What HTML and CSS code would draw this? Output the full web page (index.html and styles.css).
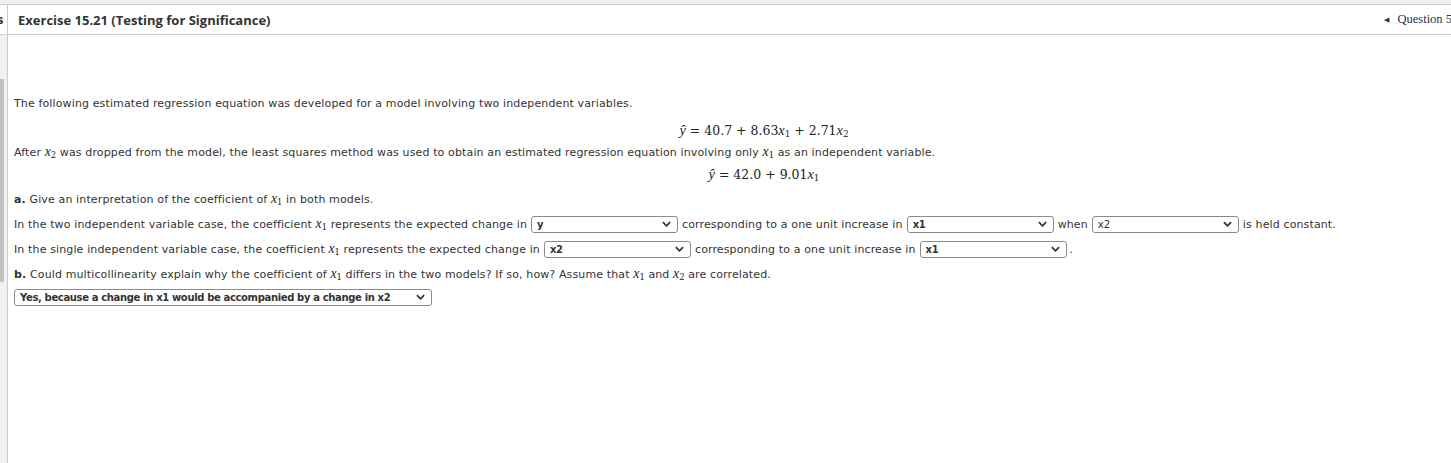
FILE: index.html
```html
<!DOCTYPE html>
<html>
<head>
<meta charset="utf-8">
<link rel="stylesheet" href="styles.css">
</head>
<body>
<div class="page">
  <div class="topstrip"></div>
  <div class="frame">
    <div class="side">
      <div class="side-head">s</div>
      <div class="side-body"><div class="thumb"></div></div>
    </div>
    <div class="main">
      <div class="head">
        <div class="title">Exercise 15.21 (Testing for Significance)</div>
        <div class="qnav"><span class="tri">&#9664;</span>Question 5</div>
      </div>
      <div class="content">
        <div class="row r-first">The following estimated regression equation was developed for a model involving two independent variables.</div>
        <div class="row eq eq1"><span class="m"><i>ŷ</i> = 40.7 + 8.63<i>x</i><sub>1</sub> + 2.71<i>x</i><sub>2</sub></span></div>
        <div class="row r-tight">After <span class="mi"><i>x</i><sub>2</sub></span> was dropped from the model, the least squares method was used to obtain an estimated regression equation involving only <span class="mi"><i>x</i><sub>1</sub></span> as an independent variable.</div>
        <div class="row eq r-tight"><span class="m"><i>ŷ</i> = 42.0 + 9.01<i>x</i><sub>1</sub></span></div>
        <div class="row"><b>a.</b> Give an interpretation of the coefficient of <span class="mi"><i>x</i><sub>1</sub></span> in both models.</div>
        <div class="row">In the two independent variable case, the coefficient <span class="mi"><i>x</i><sub>1</sub></span> represents the expected change in<span class="sel w147"><span class="val">y</span><svg class="chev" viewBox="0 0 10 6"><path d="M1 1 L5 5 L9 1" /></svg></span>corresponding to a one unit increase in<span class="sel w147"><span class="val">x1</span><svg class="chev" viewBox="0 0 10 6"><path d="M1 1 L5 5 L9 1" /></svg></span>when<span class="sel w147"><span class="val plain">x2</span><svg class="chev" viewBox="0 0 10 6"><path d="M1 1 L5 5 L9 1" /></svg></span>is held constant.</div>
        <div class="row">In the single independent variable case, the coefficient <span class="mi"><i>x</i><sub>1</sub></span> represents the expected change in<span class="sel w147"><span class="val">x2</span><svg class="chev" viewBox="0 0 10 6"><path d="M1 1 L5 5 L9 1" /></svg></span>corresponding to a one unit increase in<span class="sel w147 nr"><span class="val">x1</span><svg class="chev" viewBox="0 0 10 6"><path d="M1 1 L5 5 L9 1" /></svg></span><span class="dot">.</span></div>
        <div class="row"><b>b.</b> Could multicollinearity explain why the coefficient of <span class="mi"><i>x</i><sub>1</sub></span> differs in the two models? If so, how? Assume that <span class="mi"><i>x</i><sub>1</sub></span> and <span class="mi"><i>x</i><sub>2</sub></span> are correlated.</div>
        <div class="row r-sel"><span class="sel wide first"><span class="val">Yes, because a change in x1 would be accompanied by a change in x2</span><svg class="chev" viewBox="0 0 10 6"><path d="M1 1 L5 5 L9 1" /></svg></span></div>
      </div>
    </div>
  </div>
</div>
</body>
</html>
```

FILE: styles.css
```css
html, body {
  margin: 0;
  padding: 0;
  background: #ffffff;
  overflow: hidden;
}
.page {
  width: 1514px;
  height: 463px;
  display: flex;
  flex-direction: column;
  font-family: "DejaVu Sans", Verdana, sans-serif;
  color: #333333;
}
.topstrip {
  height: 4px;
  background: #f0f0f0;
  border-bottom: 1px solid #cccccc;
  flex: none;
}
.frame {
  flex: 1;
  display: flex;
}
.side {
  width: 7px;
  border-right: 1px solid #cccccc;
  display: flex;
  flex-direction: column;
  flex: none;
}
.side-head {
  height: 29px;
  border-bottom: 1px solid #cccccc;
  background: #ffffff;
  font-family: "Open Sans", sans-serif;
  font-weight: 700;
  font-size: 13px;
  line-height: 29px;
  overflow: hidden;
  text-indent: -3px;
  color: #333333;
}
.side-body {
  flex: 1;
  background: #f0f0f0;
}
.thumb {
  width: 4px;
  height: 203px;
  margin-top: 44px;
  background: #c1c1c1;
}
.main {
  flex: 1;
  display: flex;
  flex-direction: column;
}
.head {
  height: 29px;
  border-bottom: 1px solid #cccccc;
  display: flex;
  align-items: center;
  padding-left: 10px;
}
.title {
  font-family: "Open Sans", sans-serif;
  font-weight: 700;
  font-size: 13px;
  color: #333333;
}
.qnav {
  margin-left: auto;
  padding-right: 62px;
  font-family: "Liberation Serif", "Times New Roman", serif;
  font-size: 12.5px;
  color: #24325a;
  display: flex;
  align-items: center;
}
.tri {
  font-size: 7px;
  margin-right: 8px;
  color: #333333;
}
.content {
  padding: 58px 0 0 6px;
  width: 1500px;
}
.row {
  height: 22px;
  line-height: 22px;
  font-size: 11px;
  letter-spacing: 0.13px;
  margin-top: 3px;
  white-space: nowrap;
}
.r-first { margin-top: 0; }
.eq1 { margin-top: 4px; }
.r-tight { margin-top: 0; }
.r-sel { margin-top: 2px; }
.eq {
  text-align: center;
  letter-spacing: 0;
}
.m {
  font-family: "DejaVu Serif", "Liberation Serif", serif;
  font-size: 12.5px;
  color: #222222;
}
.m i, .mi i {
  font-family: "Liberation Serif", serif;
  font-style: italic;
  font-size: 115%;
}
.m sub, .mi sub {
  font-family: "DejaVu Serif", serif;
  font-size: 70%;
  vertical-align: -2px;
  line-height: 0;
}
.mi {
  font-family: "DejaVu Serif", serif;
  font-size: 12px;
  color: #222222;
  letter-spacing: 0;
}
.sel {
  display: inline-flex;
  align-items: center;
  justify-content: space-between;
  box-sizing: border-box;
  height: 17px;
  border: 1px solid #8a8a8a;
  border-radius: 3px;
  margin: 0 4px;
  padding: 0 6px 0 5px;
  vertical-align: middle;
  position: relative;
  top: -1px;
  background: #ffffff;
  letter-spacing: 0;
}
.sel.first { margin-left: 0; }
.sel.nr { margin-right: 3px; }
.w147 { width: 147px; }
.wide { width: 418px; }
.val {
  font-family: "DejaVu Sans", Verdana, sans-serif;
  font-weight: 700;
  font-size: 10px;
  letter-spacing: -0.35px;
  color: #333333;
  line-height: 15px;
}
.val.plain { font-weight: 400; letter-spacing: 0; }
.chev {
  width: 9px;
  height: 6px;
  fill: none;
  stroke: #333333;
  stroke-width: 2;
}
.dot { color: #333333; }
```
